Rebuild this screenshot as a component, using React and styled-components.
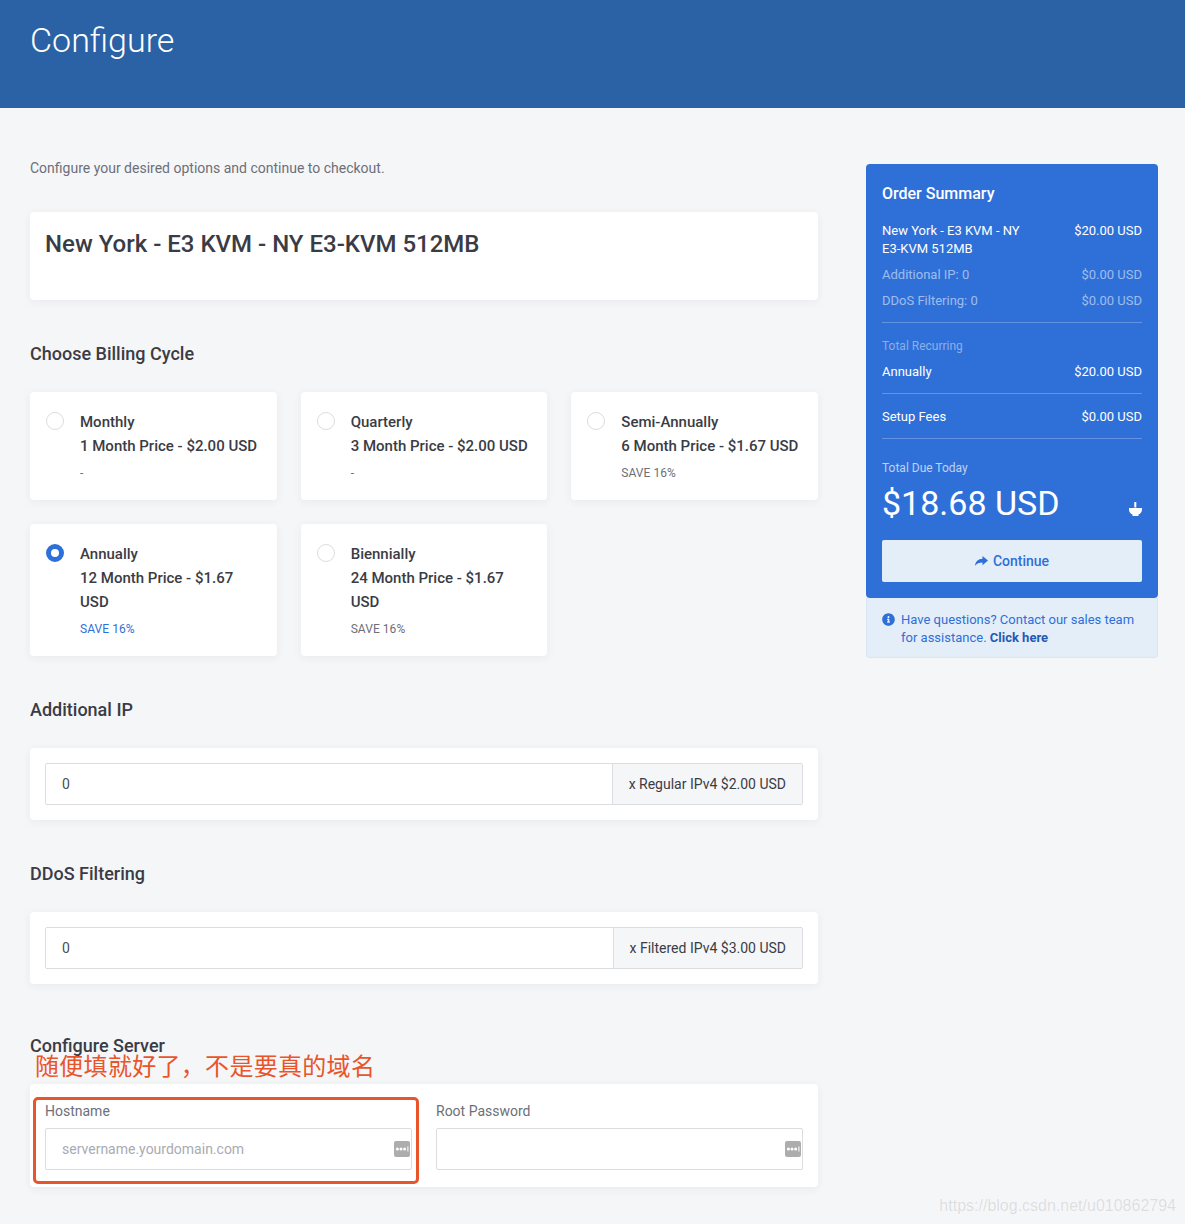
import React from 'react';
import styled, { createGlobalStyle } from 'styled-components';
import { FaInfoCircle } from 'react-icons/fa';

const GlobalStyle = createGlobalStyle`
    html, body {
        margin: 0;
        padding: 0;
        background: #f5f6f8;
        font-family: Roboto, "Liberation Sans", sans-serif;
        color: #3a3c45;
    }
    * {
        box-sizing: border-box;
    }
`;

const Page = styled.div`
    position: relative;
    width: 1185px;
    height: 1224px;
    overflow: hidden;
`;

const Header = styled.header`
    height: 108px;
    background: #2a62a5;
    padding: 17px 30px 0;
`;

const Title = styled.h1`
    margin: 0;
    font-size: 34px;
    line-height: 46px;
    font-weight: 300;
    color: #fff;
`;

const Content = styled.div`
    display: flex;
    align-items: flex-start;
    padding: 0 27px 0 30px;
    justify-content: space-between;
`;

const Main = styled.main`
    width: 788px;
    padding-top: 50px;
`;

const Intro = styled.p`
    margin: 0 0 34px;
    font-size: 14px;
    line-height: 20px;
    color: #6d6f78;
`;

const Card = styled.section`
    background: #fff;
    border-radius: 4px;
    box-shadow: 0 2px 10px rgba(40, 50, 70, 0.06);
`;

const ProductCard = styled(Card)`
    height: 88px;
    padding: 16px 15px;
`;

const ProductName = styled.h2`
    margin: 0;
    font-size: 24px;
    line-height: 32px;
    font-weight: 500;
`;

const SectionTitle = styled.h3`
    margin: ${props => props.$top || 42}px 0 26px;
    font-size: 18px;
    line-height: 24px;
    font-weight: 500;
`;

const CycleGrid = styled.div`
    display: grid;
    grid-template-columns: repeat(3, 246.67px);
    column-gap: 24px;
    row-gap: 24px;
    align-items: stretch;
`;

const CycleCard = styled(Card)`
    display: flex;
    padding: 18px 15px 0 16px;
`;

const Radio = styled.span`
    flex: none;
    width: 18px;
    height: 18px;
    margin-top: 2px;
    margin-right: 16px;
    border-radius: 50%;
    border: ${props => (props.$checked ? '5.5px solid #2f6fd8' : '1px solid #dcdde0')};
    background: #fff;
`;

const CycleText = styled.div`
    font-size: 15px;
    line-height: 24px;
    font-weight: 500;
    padding-bottom: 15px;
`;

const Save = styled.div`
    margin-top: 3px;
    font-size: 12px;
    line-height: 24px;
    font-weight: 400;
    letter-spacing: 0.05px;
    color: ${props => (props.$active ? '#2f6fd8' : '#6d6f78')};
`;

const InputCard = styled(Card)`
    padding: 15px;
`;

const InputGroup = styled.div`
    display: flex;
    height: 42px;
    border: 1px solid #dcdde0;
    border-radius: 2px;
`;

const NumberValue = styled.div`
    flex: 1;
    padding-left: 16px;
    font-size: 14px;
    line-height: 40px;
    color: #4a4c55;
`;

const Addon = styled.div`
    padding: 0 16px;
    background: #f5f6f8;
    border-left: 1px solid #dcdde0;
    font-size: 14px;
    line-height: 40px;
    color: #3a3c45;
`;

const ServerCard = styled(Card)`
    display: grid;
    grid-template-columns: 367px 367px;
    column-gap: 24px;
    height: 103px;
    padding: 17px 15px 0;
`;

const FieldLabel = styled.div`
    font-size: 14px;
    line-height: 20px;
    margin-bottom: 7px;
    color: #6d6f78;
`;

const FieldBox = styled.div`
    display: flex;
    align-items: center;
    justify-content: space-between;
    height: 42px;
    padding: 0 1px 0 16px;
    border: 1px solid #dcdde0;
    border-radius: 2px;
    font-size: 14px;
    color: #a9abb2;
`;

const Sidebar = styled.aside`
    width: 292px;
    padding-top: 56px;
`;

const Summary = styled.div`
    position: relative;
    height: 434px;
    padding: 17px 16px 16px;
    background: #2f6fd8;
    border-radius: 4px;
    color: #fff;
`;

const SummaryTitle = styled.div`
    font-size: 16px;
    line-height: 26px;
    font-weight: 500;
    margin-bottom: 15px;
`;

const Line = styled.div`
    display: flex;
    justify-content: space-between;
    font-size: 13px;
    line-height: 18px;
    font-weight: 400;
    margin-bottom: 8px;
    color: ${props => (props.$muted ? 'rgba(255, 255, 255, 0.55)' : '#fff')};
`;

const LineName = styled.span`
    max-width: 145px;
`;

const Divider = styled.div`
    height: 1px;
    background: rgba(255, 255, 255, 0.25);
    margin: ${props => props.$margin || '12px 0 14px'};
`;

const SmallLabel = styled.div`
    font-size: 12px;
    line-height: 18px;
    margin-bottom: ${props => (props.$bright ? 4 : 8)}px;
    color: ${props => (props.$bright ? 'rgba(255, 255, 255, 0.7)' : 'rgba(255, 255, 255, 0.45)')};
`;

const TotalRow = styled.div`
    display: flex;
    justify-content: space-between;
    align-items: flex-end;
    height: 44px;
    margin-bottom: 15px;
`;

const Total = styled.div`
    font-size: 34px;
    line-height: 44px;
`;

const BowlIcon = styled.svg`
    display: block;
    margin: 0 0 9px 0;
`;

const ContinueButton = styled.button`
    display: flex;
    align-items: center;
    justify-content: center;
    gap: 5px;
    width: 100%;
    height: 42px;
    border: 0;
    border-radius: 2px;
    background: #e4eef9;
    color: #2f6fd8;
    font-family: inherit;
    font-size: 14px;
    font-weight: 500;
`;

const Help = styled.div`
    display: flex;
    gap: 6px;
    height: 60px;
    padding: 13px 16px 0 15px;
    background: #e4eef9;
    border: 1px solid #d9e6f5;
    border-top: 0;
    border-radius: 0 0 4px 4px;
    font-size: 13px;
    line-height: 18px;
    color: #2f6fd8;
    svg {
        flex: none;
        margin-top: 2px;
    }
    b {
        font-weight: 700;
        color: #1f5bb5;
    }
`;

const Note = styled.div`
    position: absolute;
    left: 35px;
    top: 1048px;
    font-family: "Noto Sans CJK SC", sans-serif;
    font-size: 24px;
    letter-spacing: 0.3px;
    line-height: 34px;
    color: #e9552b;
`;

const NoteBox = styled.div`
    position: absolute;
    left: 33px;
    top: 1097px;
    width: 386px;
    height: 87px;
    border: 3px solid #e9552b;
    border-radius: 5px;
`;

const Watermark = styled.div`
    position: absolute;
    right: 9px;
    top: 1196px;
    font-family: "Liberation Sans", sans-serif;
    font-size: 16px;
    line-height: 20px;
    color: rgba(90, 90, 90, 0.16);
`;

const cycles = [
    { name: 'Monthly', price: '1 Month Price - $2.00 USD', save: '-' },
    { name: 'Quarterly', price: '3 Month Price - $2.00 USD', save: '-' },
    { name: 'Semi-Annually', price: '6 Month Price - $1.67 USD', save: 'SAVE 16%' },
    { name: 'Annually', price: '12 Month Price - $1.67 USD', save: 'SAVE 16%', checked: true },
    { name: 'Biennially', price: '24 Month Price - $1.67 USD', save: 'SAVE 16%' },
];

const PasswordIcon = () => (
    <svg width="16" height="16" viewBox="0 0 16 16">
        <rect width="16" height="16" rx="2" fill="#adadad" />
        <circle cx="3.4" cy="8" r="1.5" fill="#fff" />
        <circle cx="7" cy="8" r="1.5" fill="#fff" />
        <circle cx="10.6" cy="8" r="1.5" fill="#fff" />
        <rect x="13.4" y="5.5" width="1" height="5" fill="#fff" />
    </svg>
);

const ShareIcon = () => (
    <svg width="13" height="10" viewBox="0 0 13 10">
        <path d="M7.5 0L13 4.6L7.5 9.2V6.4C4.4 6.4 1.8 7 0 9.8C0.3 5.6 3.2 3 7.5 2.8Z" fill="currentColor" />
    </svg>
);

const App = () => {
    return (
        <Page>
            <GlobalStyle />
            <Header>
                <Title>Configure</Title>
            </Header>

            <Content>
                <Main>
                    <Intro>Configure your desired options and continue to checkout.</Intro>

                    <ProductCard>
                        <ProductName>New York - E3 KVM - NY E3-KVM 512MB</ProductName>
                    </ProductCard>

                    <SectionTitle>Choose Billing Cycle</SectionTitle>
                    <CycleGrid>
                        {cycles.map(cycle => (
                            <CycleCard key={cycle.name}>
                                <Radio $checked={cycle.checked} />
                                <CycleText>
                                    {cycle.name}
                                    <br />
                                    {cycle.price}
                                    <Save $active={cycle.checked}>{cycle.save}</Save>
                                </CycleText>
                            </CycleCard>
                        ))}
                    </CycleGrid>

                    <SectionTitle>Additional IP</SectionTitle>
                    <InputCard>
                        <InputGroup>
                            <NumberValue>0</NumberValue>
                            <Addon>x Regular IPv4 $2.00 USD</Addon>
                        </InputGroup>
                    </InputCard>

                    <SectionTitle>DDoS Filtering</SectionTitle>
                    <InputCard>
                        <InputGroup>
                            <NumberValue>0</NumberValue>
                            <Addon>x Filtered IPv4 $3.00 USD</Addon>
                        </InputGroup>
                    </InputCard>

                    <SectionTitle $top={50}>Configure Server</SectionTitle>
                    <ServerCard>
                        <div>
                            <FieldLabel>Hostname</FieldLabel>
                            <FieldBox>
                                servername.yourdomain.com
                                <PasswordIcon />
                            </FieldBox>
                        </div>
                        <div>
                            <FieldLabel>Root Password</FieldLabel>
                            <FieldBox>
                                <span />
                                <PasswordIcon />
                            </FieldBox>
                        </div>
                    </ServerCard>
                </Main>

                <Sidebar>
                    <Summary>
                        <SummaryTitle>Order Summary</SummaryTitle>
                        <Line>
                            <LineName>New York - E3 KVM - NY E3-KVM 512MB</LineName>
                            <span>$20.00 USD</span>
                        </Line>
                        <Line $muted>
                            <span>Additional IP: 0</span>
                            <span>$0.00 USD</span>
                        </Line>
                        <Line $muted>
                            <span>DDoS Filtering: 0</span>
                            <span>$0.00 USD</span>
                        </Line>
                        <Divider />
                        <SmallLabel>Total Recurring</SmallLabel>
                        <Line>
                            <span>Annually</span>
                            <span>$20.00 USD</span>
                        </Line>
                        <Divider />
                        <Line>
                            <span>Setup Fees</span>
                            <span>$0.00 USD</span>
                        </Line>
                        <Divider $margin="12px 0 20px" />
                        <SmallLabel $bright>Total Due Today</SmallLabel>
                        <TotalRow>
                            <Total>$18.68 USD</Total>
                            <BowlIcon width="13" height="14" viewBox="0 0 13 14">
                                <rect x="5.3" y="0" width="2" height="5.5" fill="#fff" />
                                <path d="M0 6h13v1.5a5.5 5.5 0 0 1-3.5 5V14H3.5v-1.5A5.5 5.5 0 0 1 0 7.5z" fill="#fff" />
                            </BowlIcon>
                        </TotalRow>
                        <ContinueButton>
                            <ShareIcon />
                            Continue
                        </ContinueButton>
                    </Summary>
                    <Help>
                        <FaInfoCircle size={13} />
                        <div>
                            Have questions? Contact our sales team for assistance. <b>Click here</b>
                        </div>
                    </Help>
                </Sidebar>
            </Content>

            <Note>随便填就好了，不是要真的域名</Note>
            <NoteBox />
            <Watermark>https://blog.csdn.net/u010862794</Watermark>
        </Page>
    );
};

export default App;
